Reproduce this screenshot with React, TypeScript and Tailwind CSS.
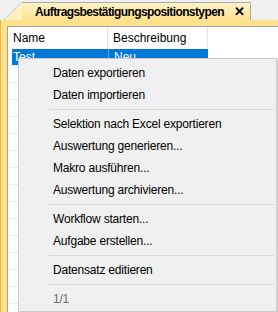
const menu: (string | null)[] = [
  'Daten exportieren',
  'Daten importieren',
  null,
  'Selektion nach Excel exportieren',
  'Auswertung generieren...',
  'Makro ausführen...',
  'Auswertung archivieren...',
  null,
  'Workflow starten...',
  'Aufgabe erstellen...',
  null,
  'Datensatz editieren',
  null,
];

export default function App() {
  const rows = Array.from({ length: 15 });

  return (
    <div className="relative w-[278px] h-[312px] overflow-hidden bg-[#f0f0f0] font-['Liberation_Sans',Arial,sans-serif] text-[12px] text-black">
      {/* Tab strip */}
      <div className="flex h-[20px] items-end pl-[4px]">
        <svg width="18" height="18" viewBox="0 0 18 18" className="block">
          <polygon points="0,18 17,1 18,1 18,18" fill="#fff0bd" />
          <line x1="0" y1="18" x2="17" y2="1" stroke="#a9a9a9" strokeDasharray="1 1" />
        </svg>
        <div className="flex h-[18px] w-[229px] items-center border-t border-r border-[#a9a9a9] rounded-tr-[2px] bg-gradient-to-b from-[#fff3c6] to-[#ffe18d]">
          <span className="ml-[13px] font-bold leading-none tracking-[-0.6px]">Auftragsbestätigungspositionstypen</span>
          <span className="ml-auto mr-[5px] font-bold text-[13px] leading-none">✕</span>
        </div>
      </div>

      {/* Frame and grid */}
      <div className="h-[292px] bg-[#ffe08d] pl-[6px] pt-[6px] border-l border-[#e9b949]">
        <div className="h-full bg-white border-l border-t border-[#a0a0a0]">
          <div className="flex h-[22px] items-center pl-[4px]">
            <div className="w-[96px] h-full flex items-center px-[1px] border-r border-[#e5e5e5]">Name</div>
            <div className="w-[100px] h-full flex items-center px-[5px] border-r border-[#e5e5e5]">Beschreibung</div>
          </div>
          {rows.map((_, i) => (
            <div key={i} className="flex h-[17px] pl-[4px] border-b border-[#ececec]">
              {i === 0 && (
                <>
                  <div className="w-[96px] flex items-center px-[1px] bg-[#0078d7] text-white">Test</div>
                  <div className="w-[100px] flex items-center px-[5px] bg-[#0078d7] text-white border-l border-[#5aa0e0]">Neu</div>
                </>
              )}
            </div>
          ))}
        </div>
      </div>

      {/* Context menu */}
      <div className="absolute left-[18px] top-[58px] w-[259px] h-[254px] bg-[#f0f0f0] border border-[#cccccc] pt-[3px] tracking-[-0.2px] shadow-[2px_2px_3px_rgba(0,0,0,0.18)]">
        {menu.map((label, i) =>
          label === null ? (
            <div key={i} className="h-[7px] flex items-center ml-[30px] mr-[2px]">
              <div className="w-full border-t border-[#d7d7d7]" />
            </div>
          ) : (
            <div key={i} className="h-[22px] flex items-center pl-[34px]">{label}</div>
          )
        )}
        <div className="h-[22px] flex items-center pl-[34px] text-[#6d6d6d]">1/1</div>
      </div>
    </div>
  );
}
